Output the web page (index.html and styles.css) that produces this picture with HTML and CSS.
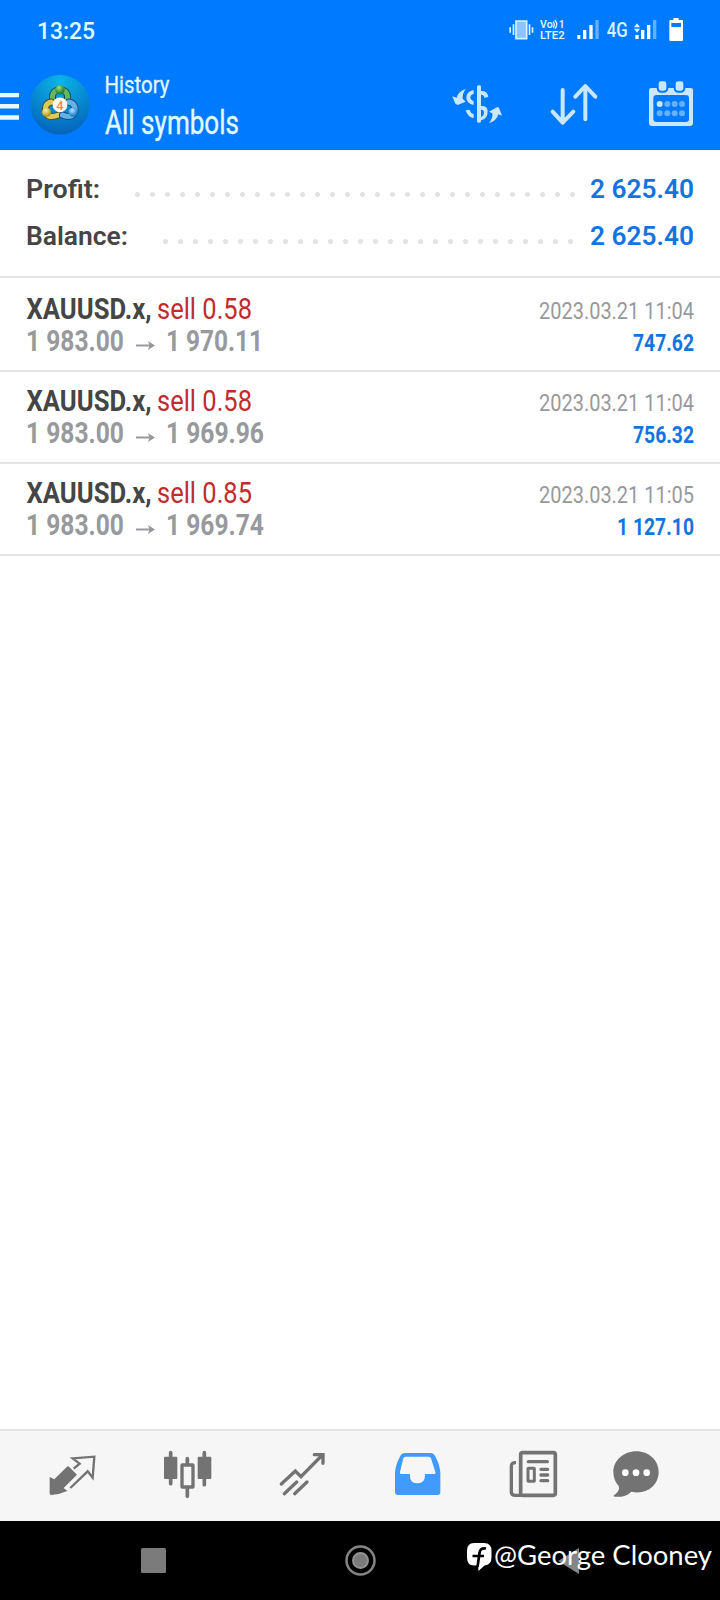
FILE: index.html
```html
<!DOCTYPE html>
<html lang="en">
<head>
<meta charset="utf-8">
<title>History</title>
<link rel="stylesheet" href="styles.css">
</head>
<body>
<header class="header">
  <div class="status">
    <svg class="clock" width="58" height="60"><text x="0" y="39" textLength="58" lengthAdjust="spacingAndGlyphs">13:25</text></svg>
    <svg class="indicators" width="180" height="60" viewBox="50 0 540 180">
      <g fill="#d8f2ff">
        <path d="M77 63h32v53H77z" fill="#8dc4ff" stroke="#d8f2ff" stroke-width="5"/>
        <path d="M67 73h5v32h-5zM57 82h5v16h-5zM115 73h5v32h-5zM124 82h5v16h-5z"/>
        <text class="volte" x="149" y="84" textLength="38" lengthAdjust="spacingAndGlyphs">Vo</text>
        <path d="M188 65q8 9 0 18M193 60q13 13 0 26" fill="none" stroke="#d8f2ff" stroke-width="4"/>
        <text class="volte" x="205" y="84">1</text>
        <text class="volte" x="149" y="117" textLength="74" lengthAdjust="spacingAndGlyphs">LTE2</text>
        <path d="M261 105h9v12h-9zM278 90h10v27h-10zM297 75h10v42h-10z" fill="#fff"/>
        <path d="M315 60h10v57h-10z" fill="#64b1ff"/>
        <text class="network" x="349" y="110" textLength="63" lengthAdjust="spacingAndGlyphs">4G</text>
        <path d="M435 105h10v12h-10zM452 90h10v27h-10zM470 75h10v42h-10z" fill="#fff"/>
        <path d="M488 60h10v57h-10z" fill="#64b1ff"/>
        <path d="M431 82l9-12 9 12zM431 86l9 12 9-12z"/>
        <path fill="#fff" fill-rule="evenodd" d="M549 54h16v6h10q3 0 3 3v57q0 3-3 3h-35q-3 0-3-3V63q0-3 3-3h9zM543 69v12h29V69z"/>
      </g>
    </svg>
  </div>
  <div class="toolbar">
    <svg class="menu" width="19" height="89" viewBox="0 60 19 89"><path fill="#e6fbff" d="M0 93h19v4.300H0zM0 104h19v4.600H0zM0 115.300h19v4.500H0z"/></svg>
    <svg class="logo" width="60" height="89" viewBox="30 60 60 89">
      <defs>
        <radialGradient id="sky" cx=".5" cy=".1" r=".9"><stop offset="0" stop-color="#0cb5e7"/><stop offset=".55" stop-color="#0789d0"/><stop offset="1" stop-color="#0563ba"/></radialGradient>
        <radialGradient id="green" cx=".4" cy=".3" r=".8"><stop offset="0" stop-color="#a4dc8c"/><stop offset=".6" stop-color="#35933e"/><stop offset="1" stop-color="#17672f"/></radialGradient>
        <radialGradient id="gold" cx=".4" cy=".3" r=".8"><stop offset="0" stop-color="#fff29a"/><stop offset=".6" stop-color="#cbb32e"/><stop offset="1" stop-color="#8d7f20"/></radialGradient>
        <radialGradient id="aqua" cx=".4" cy=".3" r=".8"><stop offset="0" stop-color="#b6e6ff"/><stop offset=".6" stop-color="#3795d8"/><stop offset="1" stop-color="#1264ac"/></radialGradient>
      </defs>
      <circle cx="60" cy="104.700" r="29.800" fill="url(#sky)"/>
      <g fill="none" stroke-linecap="round">
        <path d="M53 102c-2-8 1-12 7-12s9 4 7 12" stroke="#144f55" stroke-width="7"/>
        <path d="M53 102c-2-8 1-12 7-12s9 4 7 12" stroke="#65b85d" stroke-width="5"/>
        <path d="M51.500 102c-7 1-7 8-5 12 2 3 7 3 12 1" stroke="#454f38" stroke-width="7"/>
        <path d="M51.500 102c-7 1-7 8-5 12 2 3 7 3 12 1" stroke="#decb55" stroke-width="5"/>
        <path d="M68.500 102c7 1 8 8 5 12-2 3-7 3-11 1" stroke="#164d80" stroke-width="7"/>
        <path d="M68.500 102c7 1 8 8 5 12-2 3-7 3-11 1" stroke="#65b2e8" stroke-width="5"/>
      </g>
      <circle cx="60" cy="89.700" r="4.700" fill="url(#green)"/>
      <circle cx="46.500" cy="112.200" r="4.500" fill="url(#gold)"/>
      <circle cx="73" cy="112.200" r="4.500" fill="url(#aqua)"/>
      <circle cx="60" cy="104.800" r="7.400" fill="#fff8ef"/>
      <text class="four" x="60" y="109.500" text-anchor="middle">4</text>
    </svg>
    <svg class="heading" width="136" height="89" viewBox="104 60 136 89">
      <text class="sub" x="104.500" y="93" textLength="65" lengthAdjust="spacingAndGlyphs">History</text>
      <text class="title" x="105" y="134" textLength="134" lengthAdjust="spacingAndGlyphs">All symbols</text>
    </svg>
    <svg class="action" width="50" height="89" viewBox="66 0 150 267">
      <path fill="#cbe7ff" d="M141 79q0-3 6-3t6 3v14q18-2 22 17l-11 4q-2-10-11-10v34q20-1 20 16 0 23-20 27v4q0 3-6 3t-6-3zM153 149v22q9-3 9-14 0-8-9-8zM131 90v11q-10 4-10 11 0 8 10 12v11q-22-6-22-22 0-18 22-23zM107 151l11-2q4 10 13 14v12q-18-4-24-24z"/>
      <path fill="#cbe7ff" d="M107 87q-10 13-9 29l9 9-24 10-7-4-9-22 13 4q4-18 27-26zM177 189q12-14 10-29l-10-5 25-14 5 2 9 24-11-4q-5 20-28 26z"/>
    </svg>
    <svg class="action" width="48" height="89" viewBox="360 0 144 267"><path d="M398 90v97M368 155l30 33 32-33M466 178V80M436 110l30-32 30 32" fill="none" stroke="#cbe7ff" stroke-width="12" stroke-linecap="round" stroke-linejoin="round"/></svg>
    <svg class="action" width="44" height="89" viewBox="657 0 132 267">
      <path fill="#cbe7ff" fill-rule="evenodd" d="M664 84h118q7 0 7 7v98q0 9-9 9H666q-9 0-9-9V91q0-7 7-7zM680 105q-10 0-10 10v62q0 9 10 9h87q10 0 10-9v-62q0-10-10-10z"/>
      <g fill="#cbe7ff" stroke="#007aff" stroke-width="6"><rect x="683" y="61" width="29" height="34" rx="10"/><rect x="734" y="61" width="29" height="34" rx="10"/></g>
      <circle cx="689" cy="132" r="9" fill="#cbe7ff"/>
      <g fill="#66b0ff"><circle cx="712" cy="132" r="9"/><circle cx="734" cy="132" r="9"/><circle cx="756" cy="132" r="9"/><circle cx="689" cy="160" r="9"/><circle cx="712" cy="160" r="9"/><circle cx="734" cy="160" r="9"/><circle cx="756" cy="160" r="9"/></g>
    </svg>
  </div>
</header>

<main class="content">
  <section class="summary">
    <div class="total">
      <svg class="label" width="74" height="47"><text x="-1" y="29" textLength="74" lengthAdjust="spacingAndGlyphs">Profit:</text></svg>
      <span class="dots profit-dots"></span>
      <svg class="sum" width="105" height="47"><text x="1" y="29" textLength="104" lengthAdjust="spacingAndGlyphs">2 625.40</text></svg>
    </div>
    <div class="total">
      <svg class="label" width="102" height="47"><text x="-1" y="29" textLength="102" lengthAdjust="spacingAndGlyphs">Balance:</text></svg>
      <span class="dots balance-dots"></span>
      <svg class="sum" width="105" height="47"><text x="1" y="29" textLength="104" lengthAdjust="spacingAndGlyphs">2 625.40</text></svg>
    </div>
  </section>
  <section class="deals">
    <article class="deal">
      <svg width="300" height="90"><text class="symbol" x="-0.500" y="39" textLength="125" lengthAdjust="spacingAndGlyphs">XAUUSD.x,</text><text class="side" x="130" y="39" textLength="95" lengthAdjust="spacingAndGlyphs">sell 0.58</text><text class="price" x="-1" y="71" textLength="98" lengthAdjust="spacingAndGlyphs">1 983.00</text><path class="arrow" d="M109 65.500h16"/><path class="tip" d="M121 61l7 4.500-7 4.500 1.500-4.500z"/><text class="price" x="139" y="71" textLength="97" lengthAdjust="spacingAndGlyphs">1 970.11</text></svg>
      <svg width="180" height="90"><text class="date" x="24" y="39" textLength="155" lengthAdjust="spacingAndGlyphs">2023.03.21 11:04</text><text class="gain" x="118" y="71" textLength="61" lengthAdjust="spacingAndGlyphs">747.62</text></svg>
    </article>
    <article class="deal">
      <svg width="300" height="90"><text class="symbol" x="-0.500" y="39" textLength="125" lengthAdjust="spacingAndGlyphs">XAUUSD.x,</text><text class="side" x="130" y="39" textLength="95" lengthAdjust="spacingAndGlyphs">sell 0.58</text><text class="price" x="-1" y="71" textLength="98" lengthAdjust="spacingAndGlyphs">1 983.00</text><path class="arrow" d="M109 65.500h16"/><path class="tip" d="M121 61l7 4.500-7 4.500 1.500-4.500z"/><text class="price" x="139" y="71" textLength="98" lengthAdjust="spacingAndGlyphs">1 969.96</text></svg>
      <svg width="180" height="90"><text class="date" x="24" y="39" textLength="155" lengthAdjust="spacingAndGlyphs">2023.03.21 11:04</text><text class="gain" x="118" y="71" textLength="61" lengthAdjust="spacingAndGlyphs">756.32</text></svg>
    </article>
    <article class="deal">
      <svg width="300" height="90"><text class="symbol" x="-0.500" y="39" textLength="125" lengthAdjust="spacingAndGlyphs">XAUUSD.x,</text><text class="side" x="130" y="39" textLength="95" lengthAdjust="spacingAndGlyphs">sell 0.85</text><text class="price" x="-1" y="71" textLength="98" lengthAdjust="spacingAndGlyphs">1 983.00</text><path class="arrow" d="M109 65.500h16"/><path class="tip" d="M121 61l7 4.500-7 4.500 1.500-4.500z"/><text class="price" x="139" y="71" textLength="98" lengthAdjust="spacingAndGlyphs">1 969.74</text></svg>
      <svg width="180" height="90"><text class="date" x="24" y="39" textLength="155" lengthAdjust="spacingAndGlyphs">2023.03.21 11:05</text><text class="gain" x="102" y="71" textLength="77" lengthAdjust="spacingAndGlyphs">1 127.10</text></svg>
    </article>
  </section>
</main>

<nav class="tabs">
  <svg width="115" height="90" viewBox="-45 33 345 270">
    <path fill="#737373" d="M117 140l24 24-40 40 11 9q-22 10-49 12-4 0-4-5v-49l14 7 38-38q3-3 6 0z"/>
    <path d="M131 146l18-15-21-16 65-5-5 63-15-19-52 50" fill="none" stroke="#737373" stroke-width="7"/>
  </svg>
  <svg width="115" height="90" viewBox="300 33 345 270">
    <g fill="#737373"><rect x="402" y="110" width="40" height="67" rx="3"/><rect x="503" y="110" width="41" height="67" rx="3"/></g>
    <path d="M422 98v93M523 98v96M472 116v16M472 206v23" stroke="#737373" stroke-width="11" stroke-linecap="round"/>
    <rect x="456" y="135" width="33" height="66" rx="1" fill="none" stroke="#737373" stroke-width="10"/>
  </svg>
  <svg width="115" height="90" viewBox="645 33 345 270"><path d="M754 192l42-39 17 17 64-65M853 104h26v26M763 221l37-35M794 221l37-35" fill="none" stroke="#737373" stroke-width="10" stroke-linecap="round"/></svg>
  <svg width="115" height="90" viewBox="-30 33 345 270"><path fill="#419bff" fill-rule="evenodd" d="M103 99h80q8 0 12 8 16 31 16 52v57q0 9-9 9H84q-9 0-9-9v-57q0-21 16-52 4-8 12-8zM107 110q-5 0-7 5L90 156q-2 6 4 6h26q-3 28 22 28t23-28h26q7 0 5-6l-13-41q-2-5-7-5z"/></svg>
  <svg width="115" height="90" viewBox="315 33 345 270">
    <g fill="none" stroke="#737373"><rect x="452" y="98" width="104" height="128" rx="6" stroke-width="11"/><path d="M438 128q-14-1-14 10v79q0 9 12 9h20" stroke-width="10"/><rect x="474" y="145" width="19" height="39" rx="1" stroke-width="9"/><path d="M475 125h57M513 148h20M513 165h20M513 182h20" stroke-width="10" stroke-linecap="round"/></g>
  </svg>
  <svg width="91" height="90" viewBox="660 33 273 270">
    <path fill="#737373" d="M799 94c38 0 67 27 67 62 0 42-40 70-82 59-14 14-32 17-50 15-4-1-4-3-1-5 12-9 16-16 13-27-10-11-16-25-16-42 0-35 31-62 69-62z"/>
    <g fill="#fff"><circle cx="766" cy="158" r="10"/><circle cx="798" cy="158" r="10"/><circle cx="830" cy="158" r="10"/></g>
  </svg>
</nav>

<footer class="system">
  <svg width="25" height="25"><rect width="25" height="25" rx="1.500" fill="#7b7b7b"/></svg>
  <svg class="home" width="31" height="31"><circle cx="15.500" cy="15.500" r="14" fill="none" stroke="#858585" stroke-width="2.500"/><circle cx="15.500" cy="15.500" r="7.500" fill="#7b7b7b" stroke="#929292" stroke-width="2"/></svg>
  <svg width="22" height="26"><path d="M21 0v26L0 13z" fill="#858585"/></svg>
  <svg class="mark" width="250" height="44" viewBox="464 1540 250 44">
    <path fill="#fff" d="M474 1543h10q7.500 0 7.500 8v6q0 8-7 8.500l-6 5.500-.5-5.500h-4q-7 0-7-8v-7q0-7.500 7-7.500z"/>
    <path d="M486 1548.500q-6-1-6.500 4.500l-2 14M472.500 1556h11.500" fill="none" stroke="#000" stroke-width="2.700"/>
    <text x="494" y="1564.500" textLength="218" lengthAdjust="spacingAndGlyphs">@George Clooney</text>
  </svg>
</footer>
</body>
</html>
```
FILE: styles.css
```css
* { box-sizing: border-box; }
body {
  margin: 0;
  width: 720px;
  height: 1600px;
  display: flex;
  flex-direction: column;
  overflow: hidden;
  background: #fff;
  font-family: Roboto, "Liberation Sans", sans-serif;
}
svg { display: block; flex: none; overflow: visible; }

.header { height: 150px; background: #007aff; border-bottom: 1px solid #1c70cb; }
.status { display: flex; justify-content: space-between; height: 60px; padding: 0 33px 0 37px; }
.clock text { font-size: 23px; font-weight: 500; fill: #e2f8ff; }
.volte { font-size: 31px; font-weight: 600; }
.network { font-size: 60px; font-weight: 500; }

.toolbar { display: flex; height: 89px; padding-right: 27px; }
.logo { margin-left: 11px; }
.four { font-size: 13px; font-weight: 500; fill: #ef8b3f; }
.heading { margin: 0 auto 0 14px; fill: #e2f8ff; }
.sub { font-size: 24.500px; stroke: #e2f8ff; stroke-width: .3px; }
.title { font-size: 33px; stroke: #e2f8ff; stroke-width: .4px; }
.action + .action { margin-left: 48px; }
.action:last-child { margin-left: 51px; }

.content { flex: 1; }
.summary { height: 128px; padding: 19px 26px 0 27px; border-bottom: 2px solid #e4e4e4; }
.total { display: flex; height: 47px; }
.total text { font-size: 26.400px; font-weight: 600; }
.label { fill: #454545; }
.sum { fill: #1474df; }
.dots {
  height: 5px;
  margin-top: 23px;
  margin-right: auto;
  background: radial-gradient(circle at 7.500px 2.500px, #e4e4e4 2.200px, transparent 2.900px) 0 0 / 15px 5px;
}
.profit-dots { width: 450px; margin-left: 29px; }
.balance-dots { width: 420px; margin-left: 29px; }

.deals { padding-top: 2px; }
.deal { display: flex; justify-content: space-between; height: 92px; padding: 0 25px 0 27px; border-bottom: 2px solid #e4e4e4; }
.symbol, .side, .price { font-size: 30px; }
.symbol { font-weight: 700; fill: #454545; }
.side { fill: #c02c2e; }
.price { font-weight: 700; fill: #98999c; }
.arrow { stroke: #98999c; stroke-width: 2; }
.tip { fill: #98999c; }
.date, .gain { font-size: 24.500px; }
.date { fill: #98999c; }
.gain { font-weight: 700; fill: #1474df; }

.tabs { display: flex; height: 92px; padding-left: 15px; background: #f6f6f6; border-top: 2px solid #e4e4e4; }

.system { position: relative; display: flex; align-items: center; height: 79px; padding-left: 141px; background: #000; }
.home { margin: 0 182px 0 179px; }
.mark { position: absolute; left: 464px; top: 19px; }
.mark text { font-family: Lato, sans-serif; font-size: 27px; fill: #fff; }
```
